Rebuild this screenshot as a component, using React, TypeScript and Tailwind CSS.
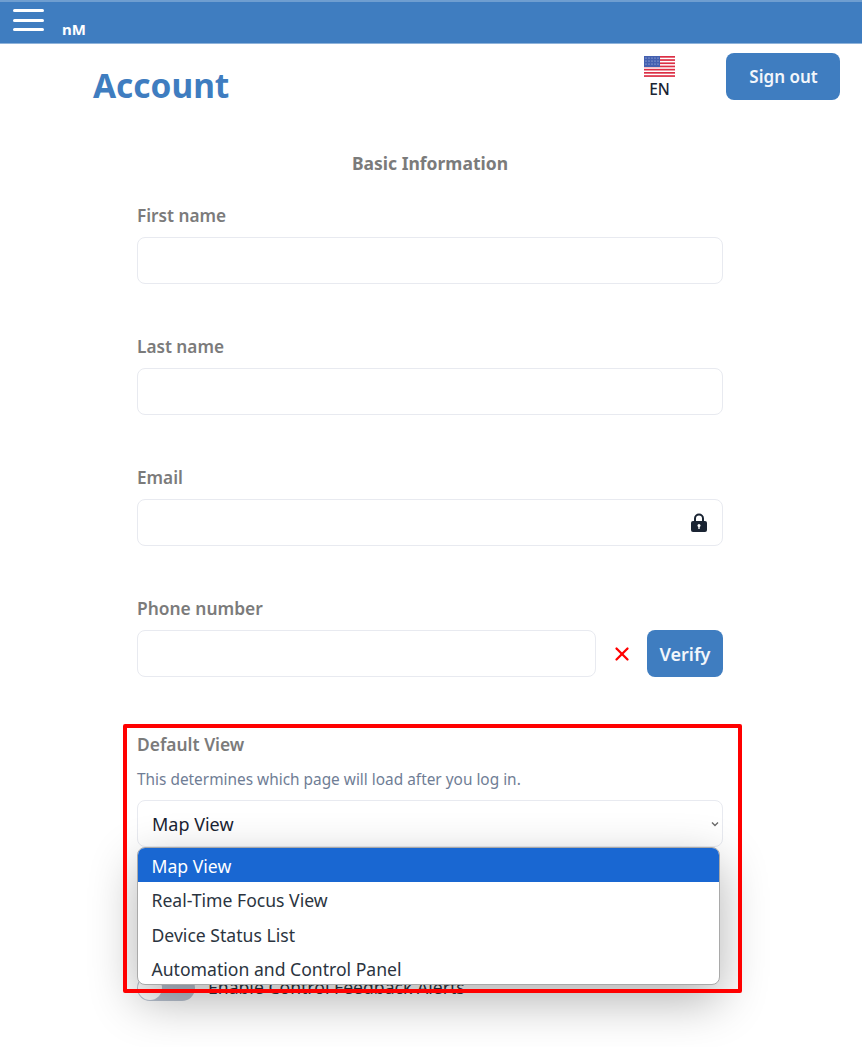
import { X } from "lucide-react";

const font = { fontFamily: '"Noto Sans", "Open Sans", sans-serif' };

const Field = ({ label, className = "" }: { label: string; className?: string }) => (
    <div className={className}>
        <label className="block h-[34px] pt-px text-[17.2px] font-semibold leading-[24px] text-[#7b7b7b]">{label}</label>
        <input className="block h-[47px] w-full rounded-lg border border-[#e8eaf0] bg-white px-4" />
    </div>
);

const UsFlag = () => (
    <svg width="31" height="21" viewBox="0 0 31 21" className="block">
        <rect width="31" height="21" fill="#fff" />
        {[0, 3.2, 6.4, 9.6, 12.8, 16, 19.2].map((y) => (
            <rect key={y} y={y} width="31" height="1.7" fill="#dc2f45" />
        ))}
        <rect width="16" height="11" fill="#4460b0" />
        {[2, 5, 8].map((y) =>
            [2, 5, 8, 11, 14].map((x) => <circle key={`${x}-${y}`} cx={x} cy={y} r="0.6" fill="#c8d2ec" />)
        )}
    </svg>
);

const LockIcon = () => (
    <svg width="16" height="19" viewBox="0 0 16 19" className="absolute bottom-[14px] right-[16px]">
        <path d="M4 9V5.5a4 4 0 0 1 8 0V9" fill="none" stroke="#1a2433" strokeWidth="2" />
        <rect y="8" width="16" height="11" rx="2" fill="#1a2433" />
        <circle cx="8" cy="12.5" r="1.5" fill="#fff" />
        <rect x="7.3" y="12.5" width="1.4" height="3.5" fill="#fff" />
    </svg>
);

const options = ["Map View", "Real-Time Focus View", "Device Status List", "Automation and Control Panel"];

const App = () => {
    return (
        <div className="h-[1047px] w-[862px] overflow-hidden bg-white" style={font}>
            <header className="flex h-[44px] border-b border-t-2 border-t-[#6f9ed0] border-b-[#8fb3da] bg-[#3f7dc0] pl-[13px]">
                <div className="mt-[7px] flex h-[22px] w-[31px] flex-col justify-between">
                    <span className="h-[3px] rounded-full bg-white" />
                    <span className="h-[3px] rounded-full bg-white" />
                    <span className="h-[3px] rounded-full bg-white" />
                </div>
                <span className="ml-[18px] mt-[16px] text-[15px] font-bold leading-[22px] text-white">nM</span>
            </header>

            <div className="flex h-[74px] pl-[93px]">
                <h1 className="mt-[19px] text-[33.4px] font-bold leading-[44px] text-[#3f7dc0]">Account</h1>
                <div className="ml-auto mr-[22px] flex">
                    <div className="mr-[51px] mt-[12px] flex flex-col items-center">
                        <UsFlag />
                        <span className="mt-[2px] text-[15.5px] font-medium leading-[20px] text-[#1a2433]">EN</span>
                    </div>
                    <button className="mt-[9px] h-[47px] w-[114px] rounded-lg bg-[#3f7dc0] pl-px pt-px text-[17px] font-semibold text-[#f2f6fb]">
                        Sign out
                    </button>
                </div>
            </div>

            <main className="ml-[137px] w-[586px]">
                <h2 className="mt-[33px] h-[52px] text-center text-[17.5px] font-bold leading-[24px] text-[#7b7b7b]">
                    Basic Information
                </h2>
                <Field label="First name" />
                <Field label="Last name" className="mt-[50px]" />
                <div className="relative mt-[50px]">
                    <Field label="Email" />
                    <LockIcon />
                </div>
                <div className="mt-[50px]">
                    <label className="block h-[34px] text-[17.4px] font-semibold leading-[24px] text-[#7b7b7b]">
                        Phone number
                    </label>
                    <div className="flex items-center">
                        <input className="h-[47px] w-[459px] rounded-lg border border-[#e8eaf0] bg-white" />
                        <X size={22} stroke="#ff0000" strokeWidth={2.5} className="ml-[15px]" />
                        <button className="ml-[14px] h-[47px] w-[76px] rounded-lg bg-[#3f7dc0] pt-px text-[18px] font-semibold text-[#f2f6fb]">
                            Verify
                        </button>
                    </div>
                </div>

                <section className="relative mt-[55px]">
                    <label className="block h-[36px] text-[17.4px] font-semibold leading-[24px] text-[#7b7b7b]">
                        Default View
                    </label>
                    <p className="h-[32px] pt-px text-[15.4px] leading-[22px] text-[#6f7d95]">
                        This determines which page will load after you log in.
                    </p>
                    <div className="relative">
                        <div className="flex h-[47px] items-center rounded-lg border border-[#e8eaf0] bg-white pl-[14px] pr-[3px] pt-px text-[18px] text-[#1a2433]">
                            Map View
                            <svg width="8" height="6" viewBox="0 0 8 6" className="ml-auto" fill="none">
                                <path d="M1 1.5 4 4.5 7 1.5" stroke="#6b6b6b" strokeWidth="1.4" />
                            </svg>
                        </div>
                        <ul className="absolute left-0 top-[47px] z-10 h-[138px] w-[583px] overflow-hidden rounded-lg border border-[#a9a9a9] bg-white text-[17.6px] text-[#2b3440] shadow-[0_16px_48px_rgba(0,0,0,0.3)]">
                            {options.map((option, i) => (
                                <li
                                    key={option}
                                    className={`flex h-[34.3px] items-center pl-[13.5px] pt-[2px] ${
                                        i === 0 ? "bg-[#1967d2] text-white" : ""
                                    }`}
                                >
                                    {option}
                                </li>
                            ))}
                        </ul>
                    </div>
                    <div className="mt-[128px] flex items-center">
                        <span className="relative h-[26px] w-[58px] rounded-full bg-[#b8c2d0]">
                            <span className="absolute left-[1px] top-[1px] h-[24px] w-[24px] rounded-full bg-white" />
                        </span>
                        <span className="mb-[3px] ml-[13px] text-[17.6px] leading-[20px] text-[#2b3440]">
                            Enable Control Feedback Alerts
                        </span>
                    </div>
                    <div className="absolute -left-[14px] -top-[8px] z-20 h-[269px] w-[619px] rounded-[2px] border-4 border-[#ff0000]" />
                </section>
            </main>
        </div>
    );
};

export default App;
